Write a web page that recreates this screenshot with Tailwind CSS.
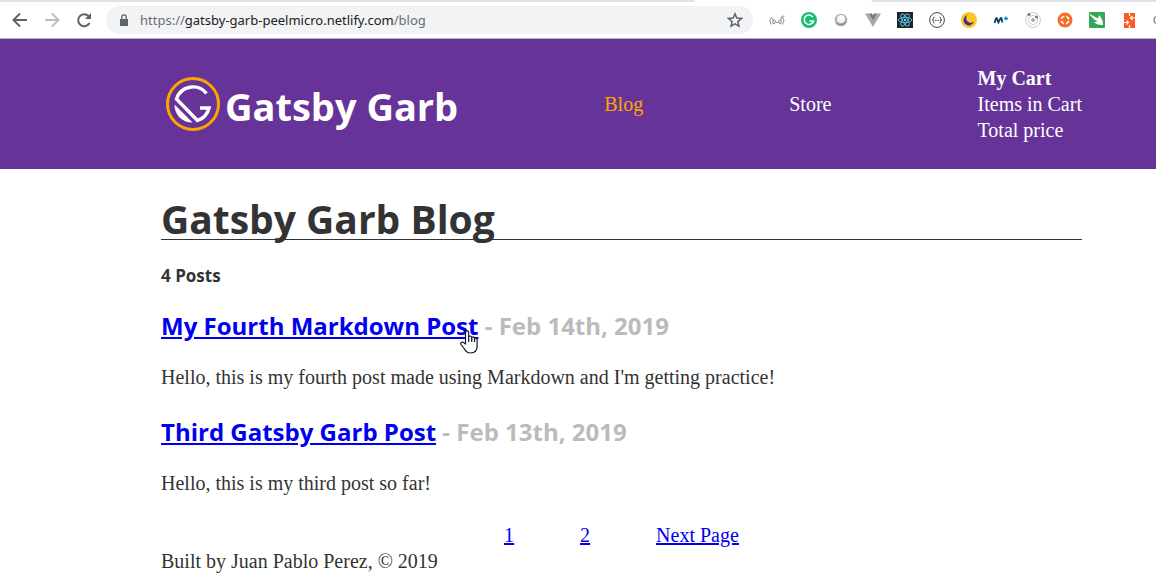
<!DOCTYPE html>
<html lang="en">
<head>
<meta charset="utf-8">
<title>Gatsby Garb Blog</title>
<script src="https://cdn.jsdelivr.net/npm/@tailwindcss/browser@4"></script>
</head>
<body class="min-h-screen overflow-hidden bg-white font-['Liberation_Serif',serif] text-[20px] leading-[26px] text-[#333]">

<!-- Browser toolbar -->
<div class="flex h-[2px] bg-[#dee1e6]"><div class="ml-[60%] w-[178px] rounded-b-sm bg-white"></div></div>
<div class="flex h-[37px] items-center border-b border-[#b6b4b6] bg-white pl-3 font-['Noto_Sans',sans-serif]">
  <button aria-label="Back" class="mr-4 shrink-0"><svg class="size-4" viewBox="0 0 16 16" fill="none" stroke="#5f6368" stroke-width="2"><path d="M15 8H2M8 1.500L1.500 8L8 14.500"/></svg></button>
  <button aria-label="Forward" class="mr-4 shrink-0"><svg class="size-4" viewBox="0 0 16 16" fill="none" stroke="#bcbec0" stroke-width="2"><path d="M1 8h13M8 1.500L14.500 8L8 14.500"/></svg></button>
  <button aria-label="Reload" class="mr-[14px] shrink-0"><svg class="size-4" viewBox="0 0 16 16"><path d="M13.500 11A6 6 0 1 1 12.500 4" fill="none" stroke="#5f6368" stroke-width="2"/><path d="M15 1v6H9z" fill="#5f6368"/></svg></button>
  <div class="flex h-7 min-w-0 flex-1 items-center rounded-full bg-[#f1f3f4] pr-[10px] pl-[14px]">
    <svg class="mr-3 h-3 w-2 shrink-0" viewBox="0 0 8 12"><path d="M0 5h8v7H0z" fill="#5f6368"/><path d="M1.800 5V3a2.200 2.200 0 0 1 4.400 0v2" fill="none" stroke="#5f6368" stroke-width="1.300"/></svg>
    <div role="textbox" aria-label="Address" contenteditable="true" class="flex-1 text-[13px] leading-5 whitespace-nowrap text-[#6b6f74]">https://<span class="text-[#202124]">gatsby-garb-peelmicro.netlify.com</span>/blog</div>
    <button aria-label="Bookmark this page" class="shrink-0"><svg class="size-4" viewBox="0 0 16 16" fill="none" stroke="#5f6368" stroke-width="1.500"><path d="M8 1.800l1.800 4.300 4.700.4-3.600 3.100 1.100 4.600L8 11.800l-4 2.400 1.100-4.600L1.500 6.500l4.700-.4z"/></svg></button>
  </div>
  <div class="ml-4 flex w-[387px] shrink-0 gap-4 overflow-hidden">
    <svg class="size-4 shrink-0" viewBox="0 0 16 16" fill="none" stroke="#8c8c8c"><path d="M2.500 5Q-.5 8.500 2 12.500M4 6v5.500M4 9q2.500-2 2.500.5t-2.500 2M7 10.500h2M12 5.500v6M12 9q-2.500-2-2.500.5t2.500 2M13.500 5q3 3 0 7.500M12 6q1-2.500 3.500-2"/></svg>
    <svg class="size-4 shrink-0" viewBox="0 0 16 16"><circle cx="8" cy="8" r="8" fill="#1dba72"/><path d="M11.800 5A4.700 4.700 0 1 0 12.500 9H8.500M12.500 9l-1 2.500" fill="none" stroke="#fff" stroke-width="1.500"/></svg>
    <svg class="size-4 shrink-0" viewBox="0 0 16 16"><circle cx="8" cy="8" r="6.300" fill="#b2b2b2"/><circle cx="8" cy="7" r="4" fill="#f4f4f4"/><path d="M3 11q5 4 10-1" fill="none" stroke="#929292" stroke-width="1.500"/><circle cx="9" cy="6" r="2" fill="#fff"/></svg>
    <svg class="size-4 shrink-0" viewBox="0 0 16 16"><path d="M0 1.500h4L8 8l4-6.500h4L8 15z" fill="#a9a9a9"/><path d="M4 1.500h3l1 2 1-2h3L8 8.500z" fill="#777"/></svg>
    <svg class="size-4 shrink-0" viewBox="0 0 16 16"><path d="M0 0h16v16H0z" fill="#20232a"/><g fill="none" stroke="#53b8d5"><ellipse cx="8" cy="8" rx="6.700" ry="2.600"/><ellipse cx="8" cy="8" rx="6.700" ry="2.600" transform="rotate(60 8 8)"/><ellipse cx="8" cy="8" rx="6.700" ry="2.600" transform="rotate(120 8 8)"/></g><circle cx="8" cy="8" r="1.300" fill="#61dafb"/></svg>
    <svg class="size-4 shrink-0" viewBox="0 0 16 16" fill="none" stroke="#444"><circle cx="8" cy="8" r="7.400"/><path d="M5.500 5q-1.300 0-1.100 1.500T3.200 8q1.400 0 1.200 1.500T5.500 11M10.500 5q1.300 0 1.100 1.500T12.800 8q-1.400 0-1.200 1.500T10.500 11"/><path d="M6 8.500h4" stroke-dasharray="1 .5"/></svg>
    <svg class="size-4 shrink-0" viewBox="0 0 16 16"><circle cx="8" cy="8" r="8" fill="#fbc629"/><path d="M6.500 3A5.300 5.300 0 1 0 13 9.500 4.500 4.500 0 0 1 6.500 3z" fill="#452c84"/></svg>
    <svg class="size-4 shrink-0" viewBox="0 0 16 16" fill="none" stroke="#0b4169"><path d="M1.500 11Q3.500 4 4 6.500T5.500 10.500Q8 4 8.500 6.500T9.500 10.500" stroke-width="1.800"/><path d="M11 6.500h4M13 4.500v4" stroke="#0782c5" stroke-width="1.300"/></svg>
    <svg class="size-4 shrink-0" viewBox="0 0 16 16" fill="none" stroke="#c8c8c8"><circle cx="8" cy="8" r="7.400"/><circle cx="8" cy="8" r="4.500"/><circle cx="8" cy="8" r="2" fill="#aaa" stroke="none"/><circle cx="4" cy="2.500" r="1.500" fill="#777" stroke="none"/><circle cx="11.500" cy="5" r="1.500" fill="#777" stroke="none"/></svg>
    <svg class="size-4 shrink-0" viewBox="0 0 16 16"><circle cx="8" cy="8" r="7.500" fill="#f36f27"/><circle cx="8" cy="8" r="3.800" fill="none" stroke="#fff" stroke-width="1.700" stroke-dasharray="3.800 2.170" transform="rotate(15 8 8)"/></svg>
    <svg class="size-4 shrink-0" viewBox="0 0 16 16"><rect width="16" height="16" rx="1" fill="#35a858"/><path d="M0 1.500L9 6.500 10 3q4 4 4 10-6 .5-9-3l4-.5Q4 7.500 0 1.500z" fill="#fff"/></svg>
    <svg class="size-4 shrink-0" viewBox="0 0 16 16"><path d="M3 1h11v15H3z" fill="#ff5722"/><path d="M8.500 1v3M8.500 13v3M9.500 6H14M3 10.500h4.500M11.500 4l-2 2 2 2M5.500 8.500l2 2-2 2" fill="none" stroke="#fff" stroke-width="1.200"/></svg>
    <svg class="size-4 shrink-0" viewBox="0 0 16 16" fill="none" stroke="#888" stroke-width="1.500"><circle cx="5" cy="8" r="4"/></svg>
  </div>
</div>

<!-- Site header -->
<header class="bg-[#639] py-[26px] pr-[74px] pl-[161px] text-white">
  <nav class="flex items-center justify-between">
    <a href="#" class="flex items-center gap-[5px] pl-[5px]">
      <svg class="size-[54px]" viewBox="0 0 54 54" fill="none"><circle cx="27" cy="27" r="25.500" stroke="#ffa500" stroke-width="3"/><path d="M40.500 16.500A17.300 17.300 0 0 0 10.500 22L31.500 43.500A17.500 17.500 0 0 0 43 31H34" stroke="#fff" stroke-width="3.400"/><path d="M8.500 27.500L26.500 45.500C16 45.500 8.500 38 8.500 27.500z" fill="#fff"/></svg>
      <span class="pt-1 font-['Open_Sans',sans-serif] text-[38px] leading-[48px] font-bold whitespace-nowrap">Gatsby Garb</span>
    </a>
    <a href="#" class="text-[#ffa500]">Blog</a>
    <a href="#">Store</a>
    <div><p class="font-bold">My Cart</p><p>Items in Cart</p><p>Total price</p></div>
  </nav>
</header>

<div class="pt-[30px] pr-[74px] pl-[161px]">
  <main>
    <h1 class="mb-[23px] border-b border-[#333] font-['Open_Sans',sans-serif] text-[39px] leading-[40px] font-bold">Gatsby Garb Blog</h1>
    <h4 class="mb-5 font-['Open_Sans',sans-serif] text-[17px] font-bold">4 Posts</h4>
    <article class="mb-[25px]">
      <h3 class="mb-[21px] font-['Open_Sans',sans-serif] text-[24px] leading-[34px] font-bold text-[#bbb]"><span class="relative"><a href="#" class="text-[#00e] underline">My Fourth Markdown Post</a><svg class="absolute -bottom-3 right-0 h-6 w-[18px]" viewBox="0 0 18 24" fill="#fff" stroke="#111827" stroke-width="1.200" stroke-linejoin="round"><path d="M5.500 14V2.500a1.600 1.600 0 0 1 3.200 0V9V7.500a1.500 1.500 0 0 1 3 0V9.500V8.300a1.400 1.400 0 0 1 2.800 0V10.500V9.500a1.300 1.300 0 0 1 2.600 0V16q0 7-6.600 7-4 0-6-4L1 14.500q-.8-1.500.7-2.200t3 1.200z"/><path d="M8.700 9v3M11.700 9v3M14.500 10v2"/></svg></span> - Feb 14th, 2019</h3>
      <p>Hello, this is my fourth post made using Markdown and I'm getting practice!</p>
    </article>
    <article class="mb-[26px]">
      <h3 class="mb-[21px] font-['Open_Sans',sans-serif] text-[24px] leading-[34px] font-bold text-[#bbb]"><a href="#" class="text-[#00e] underline">Third Gatsby Garb Post</a> - Feb 13th, 2019</h3>
      <p>Hello, this is my third post so far!</p>
    </article>
    <nav class="flex justify-center gap-[66px] text-[#00e] underline"><a href="#">1</a><a href="#">2</a><a href="#">Next Page</a></nav>
  </main>
  <footer>Built by Juan Pablo Perez, © 2019</footer>
</div>
</body>
</html>
